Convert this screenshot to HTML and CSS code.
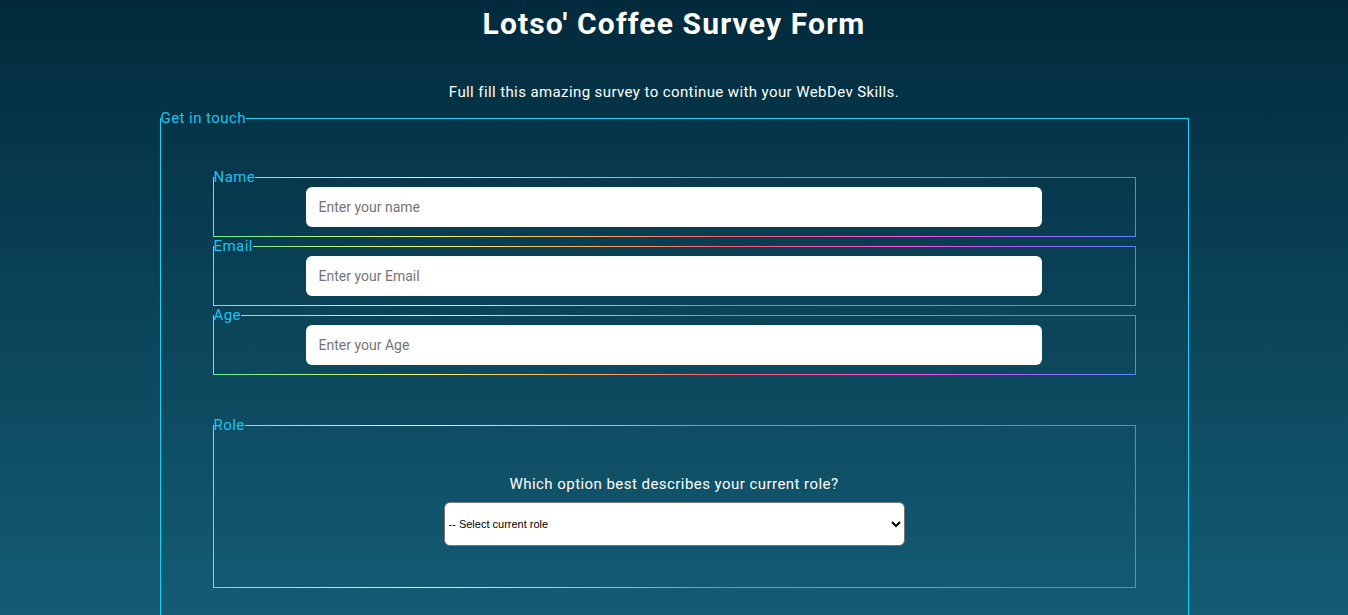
FILE: index.html
```html
<!DOCTYPE html>
<html lang="en">
<head>
<meta charset="utf-8">
<title>Lotso' Coffee Survey Form</title>
<link rel="stylesheet" href="styles.css">
</head>
<body>
<h1 class="title">Lotso' Coffee Survey Form</h1>
<p class="subtitle">Full fill this amazing survey to continue with your WebDev Skills.</p>
<form class="survey">
  <fieldset class="group">
    <legend class="group-legend">Get in touch</legend>
    <fieldset class="field">
      <legend class="field-legend">Name</legend>
      <input class="text-input" type="text" placeholder="Enter your name">
    </fieldset>
    <fieldset class="field">
      <legend class="field-legend">Email</legend>
      <input class="text-input" type="email" placeholder="Enter your Email">
    </fieldset>
    <fieldset class="field">
      <legend class="field-legend">Age</legend>
      <input class="text-input" type="number" placeholder="Enter your Age">
    </fieldset>
    <fieldset class="field role">
      <legend class="field-legend">Role</legend>
      <label class="question" for="role">Which option best describes your current role?</label>
      <select class="select" id="role">
        <option>-- Select current role</option>
        <option>Student</option>
        <option>Full Time Job</option>
        <option>Full Time Learner</option>
        <option>Prefer not to say</option>
        <option>Other</option>
      </select>
    </fieldset>
  </fieldset>
</form>
</body>
</html>
```

FILE: styles.css
```css
html, body {
  margin: 0;
  padding: 0;
}
body {
  min-height: 100vh;
  background: linear-gradient(180deg, #022a3c 0px, #135c74 615px, #1a6b85 1100px);
  background-color: #1a6b85;
  font-family: Roboto, "Liberation Sans", Arial, sans-serif;
  color: #ffffff;
}
.title {
  margin: 0;
  padding-top: 4px;
  font-size: 30px;
  line-height: 40px;
  font-weight: 700;
  letter-spacing: 1.15px;
  text-align: center;
}
.subtitle {
  margin: 38px 0 7px;
  font-size: 15px;
  line-height: 20px;
  letter-spacing: 0.4px;
  text-align: center;
}
.survey {
  display: flex;
  justify-content: center;
  padding-bottom: 40px;
}
.group {
  box-sizing: border-box;
  width: 1029px;
  margin: 0;
  padding: 40px 0 70px;
  border: 1px solid #1fd0f4;
  min-inline-size: 0;
}
.group-legend,
.field-legend {
  padding: 0;
  font-size: 15px;
  line-height: 19px;
  letter-spacing: 0.45px;
  color: #20c2ee;
}
.field {
  margin: 0 52px;
  padding: 0 0 9px;
  border: 1px solid;
  border-image: linear-gradient(90deg, #6cf08e 0%, #f4f86c 22%, #ffa55a 42%, #ff5b6f 55%, #ff4fe6 76%, #a55cff 88%, #5a84ff 100%) 1;
  min-inline-size: 0;
}
.text-input {
  display: block;
  box-sizing: border-box;
  width: 80%;
  height: 40px;
  margin: 0 auto;
  padding: 0 13px;
  border: none;
  border-radius: 6px;
  background: #ffffff;
  font-family: Roboto, "Liberation Sans", Arial, sans-serif;
  font-size: 14px;
  color: #222;
}
.text-input::placeholder {
  color: #757575;
}
.role {
  margin-top: 41px;
  padding: 40px 0 41px;
  display: flex;
  flex-direction: column;
  align-items: center;
}
.question {
  font-size: 15px;
  line-height: 19px;
  letter-spacing: 0.45px;
  margin-bottom: 8px;
}
.select {
  box-sizing: border-box;
  width: 461px;
  height: 44px;
  border: 1px solid #767676;
  border-radius: 6px;
  background: #ffffff;
  font-family: "Liberation Sans", Arial, sans-serif;
  font-size: 11px;
  color: #000;
}
```
